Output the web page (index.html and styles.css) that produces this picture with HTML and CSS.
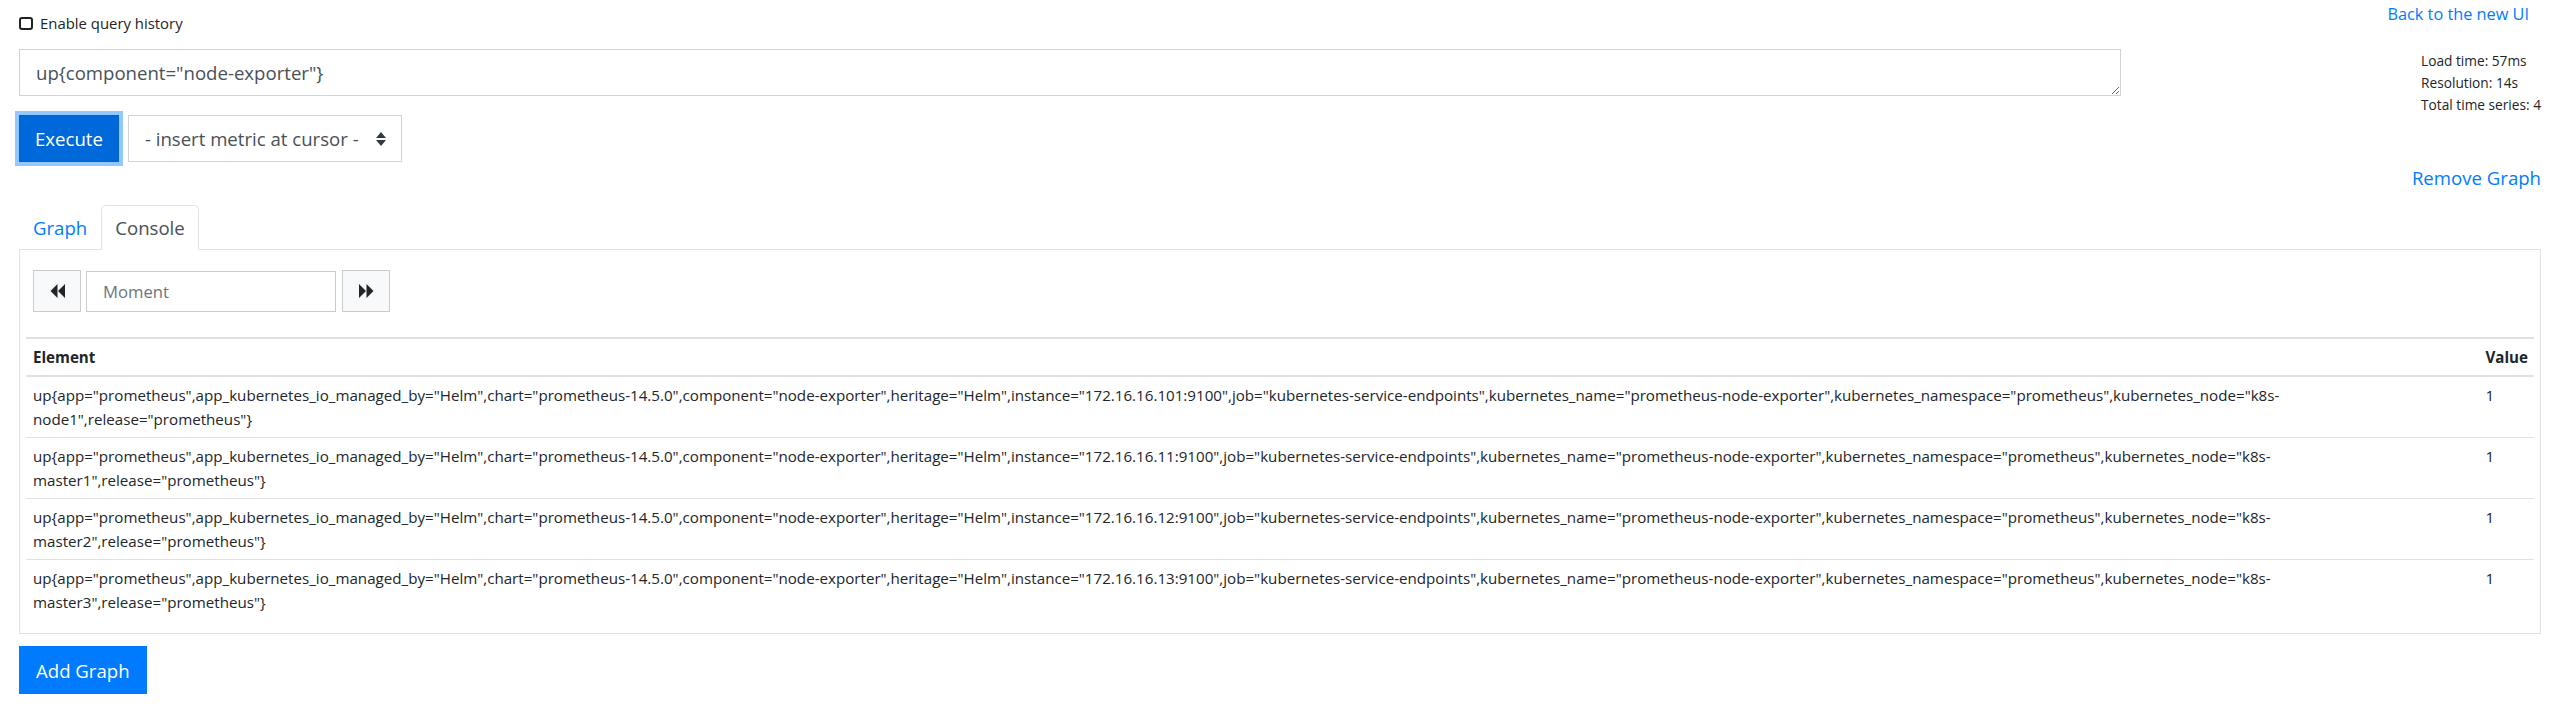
FILE: index.html
```html
<!DOCTYPE html>
<html lang="en">
<head>
<meta charset="utf-8">
<title>Prometheus Time Series Collection and Processing Server</title>
<link rel="stylesheet" href="styles.css">
</head>
<body>
<div class="page">
  <div class="topbar">
    <label class="history"><input type="checkbox" class="history-check">Enable query history</label>
    <a class="back-link" href="#">Back to the new UI</a>
  </div>

  <div class="graph">
    <div class="query-row">
      <div class="query-main">
        <textarea class="expr" rows="1">up{component="node-exporter"}</textarea>
        <div class="exec-row">
          <button class="btn-exec" type="button">Execute</button>
          <div class="metric-select">
            <span>- insert metric at cursor -</span>
            <svg class="select-arrows" width="10" height="14" viewBox="0 0 10 14"><path d="M0 6 L5 0 L10 6 Z M0 8 L10 8 L5 14 Z" fill="#343a40"/></svg>
          </div>
        </div>
      </div>
      <div class="stats">
        <div>Load time: 57ms</div>
        <div>Resolution: 14s</div>
        <div>Total time series: 4</div>
      </div>
    </div>

    <div class="remove-row"><a class="remove-link" href="#">Remove Graph</a></div>

    <ul class="tabs">
      <li><a class="tab" href="#">Graph</a></li>
      <li><a class="tab active" href="#">Console</a></li>
    </ul>

    <div class="tab-panel">
      <div class="moment">
        <button class="moment-btn" type="button"><svg width="15" height="14" viewBox="0 0 15 14"><path d="M7.5 0 L7.5 14 L0.5 7 Z M15 0 L15 14 L8 7 Z" fill="#212529"/></svg></button>
        <input class="moment-input" type="text" placeholder="Moment">
        <button class="moment-btn" type="button"><svg width="15" height="14" viewBox="0 0 15 14"><path d="M0 0 L0 14 L7 7 Z M7.5 0 L7.5 14 L14.5 7 Z" fill="#212529"/></svg></button>
      </div>

      <table class="results">
        <thead>
          <tr><th>Element</th><th class="value-col">Value</th></tr>
        </thead>
        <tbody>
          <tr><td>up{app="prometheus",app_kubernetes_io_managed_by="Helm",chart="prometheus-14.5.0",component="node-exporter",heritage="Helm",instance="172.16.16.101:9100",job="kubernetes-service-endpoints",kubernetes_name="prometheus-node-exporter",kubernetes_namespace="prometheus",kubernetes_node="k8s-node1",release="prometheus"}</td><td class="value-col">1</td></tr>
          <tr><td>up{app="prometheus",app_kubernetes_io_managed_by="Helm",chart="prometheus-14.5.0",component="node-exporter",heritage="Helm",instance="172.16.16.11:9100",job="kubernetes-service-endpoints",kubernetes_name="prometheus-node-exporter",kubernetes_namespace="prometheus",kubernetes_node="k8s-master1",release="prometheus"}</td><td class="value-col">1</td></tr>
          <tr><td>up{app="prometheus",app_kubernetes_io_managed_by="Helm",chart="prometheus-14.5.0",component="node-exporter",heritage="Helm",instance="172.16.16.12:9100",job="kubernetes-service-endpoints",kubernetes_name="prometheus-node-exporter",kubernetes_namespace="prometheus",kubernetes_node="k8s-master2",release="prometheus"}</td><td class="value-col">1</td></tr>
          <tr><td>up{app="prometheus",app_kubernetes_io_managed_by="Helm",chart="prometheus-14.5.0",component="node-exporter",heritage="Helm",instance="172.16.16.13:9100",job="kubernetes-service-endpoints",kubernetes_name="prometheus-node-exporter",kubernetes_namespace="prometheus",kubernetes_node="k8s-master3",release="prometheus"}</td><td class="value-col">1</td></tr>
        </tbody>
      </table>
    </div>
  </div>

  <button class="btn-add" type="button">Add Graph</button>
</div>
</body>
</html>
```

FILE: styles.css
```css
* {
  box-sizing: border-box;
}

html,
body {
  margin: 0;
  background: #fff;
}

body {
  font-family: "Open Sans", "Noto Sans", sans-serif;
  font-size: 18.6px;
  line-height: 30px;
  color: #212529;
}

a {
  color: #007bff;
  text-decoration: none;
}

.page {
  padding: 0 19px;
}

/* top bar */
.topbar {
  display: flex;
  justify-content: space-between;
  align-items: flex-start;
  margin-bottom: 14px;
}

.history {
  display: flex;
  align-items: center;
  margin-top: 11px;
  font-size: 14.9px;
  line-height: 24px;
}

.history-check {
  appearance: none;
  -webkit-appearance: none;
  width: 14px;
  height: 13px;
  margin: 0 7px 0 0;
  border: 2px solid #1f2124;
  border-radius: 3px;
  background: #fff;
}

.back-link {
  font-size: 16.3px;
  line-height: 24px;
  margin-top: 2px;
  margin-right: 12px;
}

/* query */
.query-row {
  display: grid;
  grid-template-columns: 5fr 1fr;
}

.expr {
  display: block;
  width: 100%;
  height: 47px;
  margin: 0;
  padding: 7.5px 16px;
  font-family: inherit;
  font-size: 18.6px;
  line-height: 30px;
  color: #495057;
  border: 1px solid #ced4da;
  border-radius: 0;
  resize: vertical;
  outline: none;
}

.exec-row {
  display: flex;
  gap: 9px;
  margin-top: 19px;
}

.btn-exec {
  height: 47px;
  padding: 0 15px;
  font-family: inherit;
  font-size: 18.6px;
  color: #fff;
  background: #0069d9;
  border: 1px solid #0062cc;
  border-radius: 0;
  box-shadow: 0 0 0 4px rgba(38, 143, 255, 0.5);
}

.metric-select {
  display: flex;
  align-items: center;
  justify-content: space-between;
  width: 274px;
  height: 47px;
  padding: 0 15px 0 16px;
  color: #495057;
  border: 1px solid #ced4da;
  background: #fff;
}

.stats {
  justify-self: end;
  margin-top: 1px;
  font-size: 13.7px;
  line-height: 22px;
}

.remove-row {
  margin-top: 1px;
  text-align: right;
}

/* tabs */
.tabs {
  display: flex;
  list-style: none;
  margin: 12px 0 0;
  padding: 0;
  border-bottom: 1px solid #dee2e6;
}

.tab {
  display: block;
  padding: 6.5px 13px;
  margin-bottom: -1px;
  border: 1px solid transparent;
  border-radius: 5px 5px 0 0;
}

.tab.active {
  color: #495057;
  background: #fff;
  border-color: #dee2e6 #dee2e6 #fff;
}

.tab-panel {
  border: 1px solid #dee2e6;
  border-top: 0;
  padding: 20px 6px 13px;
}

.moment {
  display: flex;
  align-items: center;
  margin: 0 0 25px 7px;
}

.moment-btn {
  display: flex;
  align-items: center;
  justify-content: center;
  width: 48px;
  height: 42px;
  padding: 0;
  background: #f8f9fa;
  border: 1px solid #c9cbcd;
  border-radius: 0;
}

.moment-input {
  width: 250px;
  height: 41px;
  margin: 0 6px 0 5px;
  padding: 0 16px;
  font-family: inherit;
  font-size: 16.7px;
  color: #495057;
  border: 1px solid #c9cbcd;
  border-radius: 0;
  outline: none;
}

.moment-input::placeholder {
  color: #6c757d;
}

/* results table */
.results {
  width: 100%;
  border-collapse: collapse;
  font-size: 15.15px;
  line-height: 24px;
}

.results th {
  text-align: left;
  font-weight: 700;
  padding: 6px 7px;
  border-top: 2px solid #dee2e6;
  border-bottom: 2px solid #dee2e6;
}

.results td {
  padding: 6px 7px;
  border-top: 1px solid #dee2e6;
  vertical-align: top;
}

.results .value-col {
  width: 1%;
  white-space: nowrap;
  padding-right: 6px;
}

.btn-add {
  margin-top: 12px;
  height: 48px;
  padding: 0 16px;
  font-family: inherit;
  font-size: 18.6px;
  color: #fff;
  background: #007bff;
  border: 1px solid #007bff;
  border-radius: 0;
}
```
